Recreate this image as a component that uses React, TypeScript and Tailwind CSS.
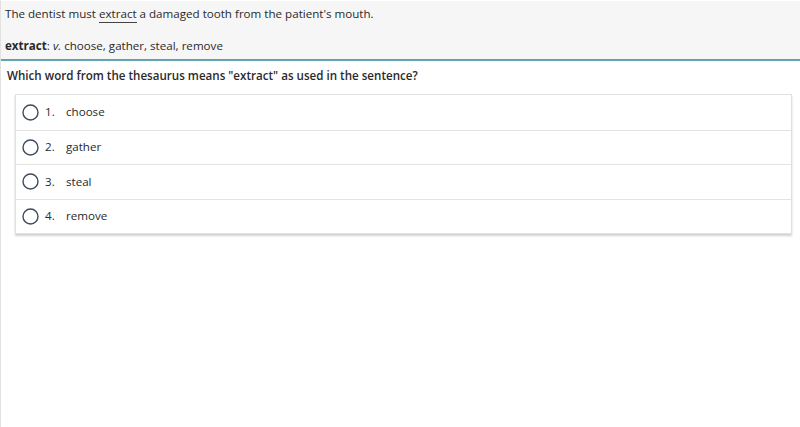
import React from 'react';

const OPTIONS = ['choose', 'gather', 'steal', 'remove'];

const Radio: React.FC = () => (
  <svg width="17" height="17" viewBox="0 0 17 17" className="shrink-0">
    <circle cx="8.5" cy="8.5" r="7.5" fill="none" stroke="#3d4b5c" strokeWidth="1.4" />
  </svg>
);

const App: React.FC = () => {
  return (
    <div
      className="w-[800px] h-[427px] bg-white border-l border-[#e2e2e2] text-[#2a2a2a] text-[11.6px] leading-[18px]"
      style={{ fontFamily: '"Open Sans", "Liberation Sans", sans-serif' }}
    >
      <div className="bg-[#f6f6f6] border-t border-white border-b-2 border-b-[#62a4b1] px-[4px] pt-[4px] h-[61px]">
        <p>
          The dentist must{' '}
          <span className="border-b border-[#444] pb-[1px]">extract</span> a damaged tooth from the patient's mouth.
        </p>
        <p className="mt-[14px]">
          <span className="font-bold">extract</span>: <i>v.</i> choose, gather, steal, remove
        </p>
      </div>

      <p className="font-semibold px-[6px] mt-[6px]">
        Which word from the thesaurus means "extract" as used in the sentence?
      </p>

      <div className="ml-[14px] mr-[8px] mt-[9px] border border-[#e0e0e0] bg-white shadow-[0_2px_2px_rgba(0,0,0,0.18)]">
        {OPTIONS.map((opt, i) => (
          <div
            key={opt}
            className={`flex items-center h-[34.5px] px-[6px] ${i > 0 ? 'border-t border-[#e3e3e3]' : ''}`}
          >
            <Radio />
            <span className="ml-[6px] w-[21px]">{i + 1}.</span>
            <span>{opt}</span>
          </div>
        ))}
      </div>
    </div>
  );
};

export default App;
